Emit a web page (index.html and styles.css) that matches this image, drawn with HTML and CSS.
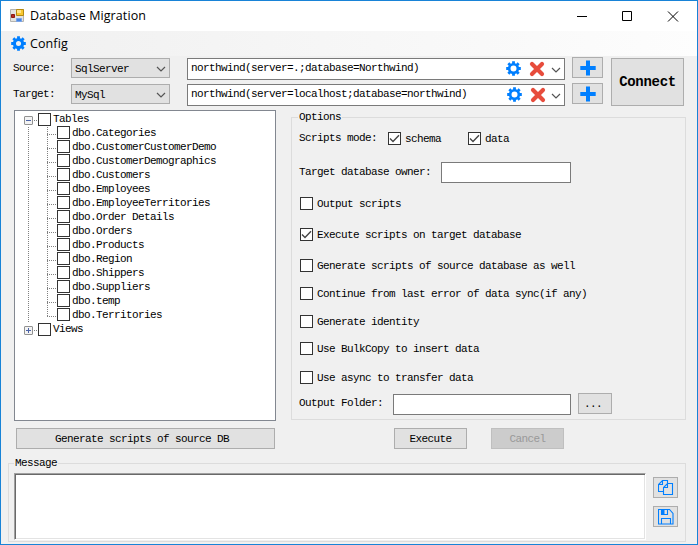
FILE: index.html
```html
<!DOCTYPE html>
<html lang="en">
<head>
<meta charset="utf-8">
<title>Database Migration</title>
<link rel="stylesheet" href="styles.css">
</head>
<body>
<svg class="defs" width="0" height="0">
  <symbol id="gear" viewBox="0 0 16 16"><g fill="none" stroke="#007fff"><circle cx="8" cy="8" r="4.600" stroke-width="2.800"/><path stroke-width="3" d="M8 .2v3M8 12.800v3M.2 8h3M12.800 8h3M2.500 2.500l2 2M11.500 11.500l2 2M2.500 13.500l2-2M11.500 4.500l2-2"/></g></symbol>
  <symbol id="cross" viewBox="0 0 16 16"><path fill="none" stroke="#e74c3c" stroke-width="4.200" stroke-linecap="round" d="M3 3l10 10M13 3L3 13"/></symbol>
  <symbol id="plus" viewBox="0 0 16 16"><path fill="none" stroke="#007fff" stroke-width="4" stroke-linejoin="round" d="M8 .5v15M.3 8h15.400"/></symbol>
  <symbol id="down" viewBox="0 0 10 6"><path fill="none" stroke="#555" stroke-width="1.200" d="M1 1l4 4 4-4"/></symbol>
  <symbol id="tick" viewBox="0 0 11 11"><path fill="none" stroke="#444" stroke-width="1.400" d="M1 5.500l3 3L10 2.300"/></symbol>
</svg>
<div class="window">
  <header class="titlebar">
    <svg class="app-icon" width="15" height="14" viewBox="0 0 15 14">
      <path fill="#e4e4e0" stroke="#b4b4b0" d="M.5.500h13v12H.5z"/>
      <path fill="#b52a20" stroke="#8d1a12" d="M1.500 5.500h3v3h-3z"/>
      <path fill="#f8c830" stroke="#b58a10" d="M6.500.500h7v6h-7z"/>
      <path fill="#ffe58a" d="M7 1h4v3H7z"/>
      <path fill="#4a86e0" stroke="#78a4ea" d="M6.500 9.500h5v3h-5z"/>
    </svg>
    <h1>Database Migration</h1>
    <svg class="controls" width="102" height="11" viewBox="0 0 102 11" fill="none" stroke="#000">
      <path d="M0 5.500h10M45.500.5h9v9h-9z"/><path d="M91 .5l10 10M101 .5l-10 10"/>
    </svg>
  </header>
  <nav class="menu"><svg width="15" height="15" viewBox="0 0 16 16"><use href="#gear"/><circle cx="8" cy="8" r="3.400" fill="none" stroke="#007fff" stroke-width="1.400"/></svg><span>Config</span></nav>
  <main>
    <section class="connections">
      <div class="rows">
        <div class="row">
          <label>Source:</label>
          <div class="combo"><span>SqlServer</span><svg width="10" height="6"><use href="#down"/></svg></div>
          <div class="profile first"><span>northwind(server=.;database=Northwind)</span><svg width="15" height="15"><use href="#gear"/></svg><svg width="16" height="16"><use href="#cross"/></svg><svg width="10" height="6"><use href="#down"/></svg></div>
          <button class="add"><svg width="16" height="16"><use href="#plus"/></svg></button>
        </div>
        <div class="row">
          <label>Target:</label>
          <div class="combo"><span>MySql</span><svg width="10" height="6"><use href="#down"/></svg></div>
          <div class="profile"><span>northwind(server=localhost;database=northwind)</span><svg width="15" height="15"><use href="#gear"/></svg><svg width="16" height="16"><use href="#cross"/></svg><svg width="10" height="6"><use href="#down"/></svg></div>
          <button class="add"><svg width="16" height="16"><use href="#plus"/></svg></button>
        </div>
      </div>
      <button class="connect">Connect</button>
    </section>
    <section class="work">
      <div class="tree">
        <div class="node"><i class="toggle"></i><i class="dots"></i><i class="check"></i><span>Tables</span></div>
        <div class="branch">
          <div class="children">
            <div class="leaf"><i class="check"></i><span>dbo.Categories</span></div>
            <div class="leaf"><i class="check"></i><span>dbo.CustomerCustomerDemo</span></div>
            <div class="leaf"><i class="check"></i><span>dbo.CustomerDemographics</span></div>
            <div class="leaf"><i class="check"></i><span>dbo.Customers</span></div>
            <div class="leaf"><i class="check"></i><span>dbo.Employees</span></div>
            <div class="leaf"><i class="check"></i><span>dbo.EmployeeTerritories</span></div>
            <div class="leaf"><i class="check"></i><span>dbo.Order Details</span></div>
            <div class="leaf"><i class="check"></i><span>dbo.Orders</span></div>
            <div class="leaf"><i class="check"></i><span>dbo.Products</span></div>
            <div class="leaf"><i class="check"></i><span>dbo.Region</span></div>
            <div class="leaf"><i class="check"></i><span>dbo.Shippers</span></div>
            <div class="leaf"><i class="check"></i><span>dbo.Suppliers</span></div>
            <div class="leaf"><i class="check"></i><span>dbo.temp</span></div>
            <div class="leaf"><i class="check"></i><span>dbo.Territories</span></div>
          </div>
        </div>
        <div class="node"><i class="toggle closed"></i><i class="dots"></i><i class="check"></i><span>Views</span></div>
      </div>
      <div class="group options">
        <div class="caption">Options</div>
        <div class="opt mode"><span class="mode-label">Scripts mode:</span><i class="check"><svg width="11" height="11"><use href="#tick"/></svg></i><span class="schema">schema</span><i class="check"><svg width="11" height="11"><use href="#tick"/></svg></i><span>data</span></div>
        <div class="opt owner"><span>Target database owner:</span><div class="field"></div></div>
        <div class="opt output"><i class="check"></i><span>Output scripts</span></div>
        <div class="opt execute"><i class="check"><svg width="11" height="11"><use href="#tick"/></svg></i><span>Execute scripts on target database</span></div>
        <div class="opt generate"><i class="check"></i><span>Generate scripts of source database as well</span></div>
        <div class="opt resume"><i class="check"></i><span>Continue from last error of data sync(if any)</span></div>
        <div class="opt identity"><i class="check"></i><span>Generate identity</span></div>
        <div class="opt bulk"><i class="check"></i><span>Use BulkCopy to insert data</span></div>
        <div class="opt async"><i class="check"></i><span>Use async to transfer data</span></div>
        <div class="opt folder"><span>Output Folder:</span><div class="field"></div><button class="browse">...</button></div>
      </div>
    </section>
    <section class="actions">
      <button class="generate-source">Generate scripts of source DB</button>
      <button class="run">Execute</button>
      <button class="cancel" disabled>Cancel</button>
    </section>
    <section class="group message">
      <div class="caption">Message</div>
      <div class="message-body">
        <div class="log"></div>
        <div class="tools">
          <button><svg width="16" height="16" viewBox="0 0 16 16" fill="none" stroke="#007fff" stroke-width="1.100"><path d="M5.500 11.500h-5v-7l4-4h5v3M4.500.500v4h-4M5.500 14.500v-7l4-4h5v11zM9.500 3.500v4h-4"/></svg></button>
          <button><svg width="16" height="16" viewBox="0 0 16 16" fill="none" stroke="#007fff" stroke-width="1.100"><path d="M.5.500h11l3.500 4v10.500H.5zM3.500 15V9.500h9V15M3.500.500v5h6v-5"/><path fill="#007fff" stroke="none" d="M3 1h3.500v5H3z"/></svg></button>
        </div>
      </div>
    </section>
  </main>
</div>
</body>
</html>
```
FILE: styles.css
```css
* { box-sizing: border-box; }
body { margin: 0; color: #000; font: 11px/14px "Liberation Mono", monospace; letter-spacing: -0.6px; }
svg { display: block; flex: none; }
.defs { position: absolute; }
button { font: inherit; letter-spacing: inherit; color: #000; padding: 0; background: #e1e1e1; border: 1px solid #adadad; border-radius: 0; display: flex; align-items: center; justify-content: center; flex: none; }
span { white-space: pre; }
.window { width: 698px; height: 545px; border: 1px solid #1883d7; background: #f0f0f0; overflow: hidden; }

.titlebar { height: 30px; background: #fff; display: flex; align-items: center; padding: 0 18px 0 9px; }
.titlebar h1 { margin: 0 0 0 5px; flex: 1; font: 12.500px/20px "Open Sans", sans-serif; letter-spacing: 0.1px; }
.menu { height: 25px; display: flex; align-items: center; padding-left: 10px; gap: 4px; background: linear-gradient(90deg, #f0f0f0, #fdfdfd); font: 12.500px/20px "Open Sans", sans-serif; letter-spacing: 0.1px; }
.menu > svg { margin-top: -1px; }

.connections { display: flex; height: 54px; padding-top: 1px; }
.rows { width: 610px; display: flex; flex-direction: column; }
.row { height: 26px; display: flex; align-items: flex-start; padding-left: 12px; }
.row label { width: 58px; line-height: 22px; }
.combo { margin-top: 1px; width: 99px; height: 20px; border: 1px solid #adadad; background: #e1e1e1; display: flex; align-items: center; justify-content: space-between; padding: 2px 3px 0 3px; }
.combo svg { margin-top: -1px; }
.profile { margin: 1px 7px 0 17px; width: 378px; height: 22px; border: 1px solid #7a7a7a; background: #fff; display: flex; align-items: center; padding: 0 3px; }
.profile span { flex: 1; padding-bottom: 2px; }
.profile svg { margin: -1px 0 0 8px; }
.profile svg:last-child { margin: 1px 0 0 5px; }
.profile.first svg:nth-child(3) { margin-right: 1px; }
.add { width: 31px; height: 21px; }
.connect { margin-top: 1px; width: 73px; height: 48px; font-size: 14px; font-weight: bold; letter-spacing: -0.3px; }

.work { display: flex; align-items: flex-start; padding-left: 13px; }
.tree { width: 262px; height: 311px; background: #fff; border: 1px solid #828790; padding: 1px 0 0 9px; }
.node { height: 14px; display: flex; align-items: center; }
.check { display: block; flex: none; width: 13px; height: 13px; border: 1px solid #333; background: #fff; }
.node span { margin-left: 2px; }
.toggle { width: 9px; height: 9px; margin-top: 3px; border: 1px solid #919191; border-radius: 1px; background: linear-gradient(#4b63a7, #4b63a7) center / 5px 1px no-repeat, #f3f3f3; }
.toggle.closed { background: linear-gradient(#4b63a7, #4b63a7) center / 5px 1px no-repeat, linear-gradient(#4b63a7, #4b63a7) center / 1px 5px no-repeat, #f3f3f3; }
.dots { width: 4px; height: 1px; margin: 3px 1px 0 0; background: repeating-linear-gradient(90deg, transparent 0 1px, #808080 1px 2px); }
.branch { margin-left: 4px; padding-left: 19px; background: repeating-linear-gradient(transparent 0 1px, #808080 1px 2px) left / 1px 100% no-repeat; }
.children { background: repeating-linear-gradient(transparent 0 1px, #808080 1px 2px) left top / 1px 190px no-repeat; }
.leaf { height: 14px; display: flex; align-items: flex-start; padding-left: 10px; background: repeating-linear-gradient(90deg, #808080 0 1px, transparent 1px 2px) left 8px / 10px 1px no-repeat; }
.leaf span { margin-left: 2px; line-height: 15px; }

.group { border: 1px solid #dcdcdc; }
.caption { width: max-content; height: 14px; margin-top: -8px; padding: 0 1px; background: #f0f0f0; }
.options { width: 395px; height: 303px; margin: 7px 0 0 15px; padding-left: 7px; }
.options .caption { margin-left: -1px; }
.opt { display: flex; align-items: center; height: 13px; padding-left: 1px; }
.opt .check + span { margin-left: 4px; }
.mode { margin-top: 8px; }
.mode-label { width: 89px; margin-left: -1px; padding-bottom: 1px; }
.mode .schema { width: 63px; }
.owner { height: 21px; margin-top: 17px; }
.owner span { width: 142px; margin-left: -1px; padding-bottom: 2px; }
.field { width: 130px; height: 21px; border: 1px solid #7a7a7a; background: #fff; }
.output { margin-top: 14px; }
.execute, .generate { margin-top: 18px; }
.resume, .identity { margin-top: 15px; }
.bulk { margin-top: 14px; }
.async { margin-top: 16px; }
.folder { height: 22px; margin-top: 9px; }
.folder span { width: 94px; margin-left: -1px; padding-bottom: 2px; }
.folder .field { width: 178px; margin-top: 1px; }
.browse { width: 34px; height: 21px; margin: -1px 0 0 7px; padding-right: 4px; }

.actions { display: flex; padding: 7px 0 0 15px; }
.actions button { height: 21px; width: 73px; }
.actions .generate-source { width: 259px; padding-right: 7px; }
.run { margin-left: 119px; }
.cancel { margin-left: 24px; }
.cancel:disabled { background: #ccc; border-color: #bfbfbf; color: #999; }

.message { width: 678px; height: 79px; margin: 14px 0 0 7px; padding-left: 5px; }
.message-body { display: flex; margin-top: 3px; }
.log { width: 632px; height: 67px; background: #fff; border: 1px solid; border-color: #a0a0a0 #fff #fff #a0a0a0; box-shadow: inset 1px 1px #696969, inset -1px -1px #e3e3e3; }
.tools { margin: 4px 0 0 7px; display: flex; flex-direction: column; gap: 8px; }
.tools button { width: 25px; height: 21px; }
```
